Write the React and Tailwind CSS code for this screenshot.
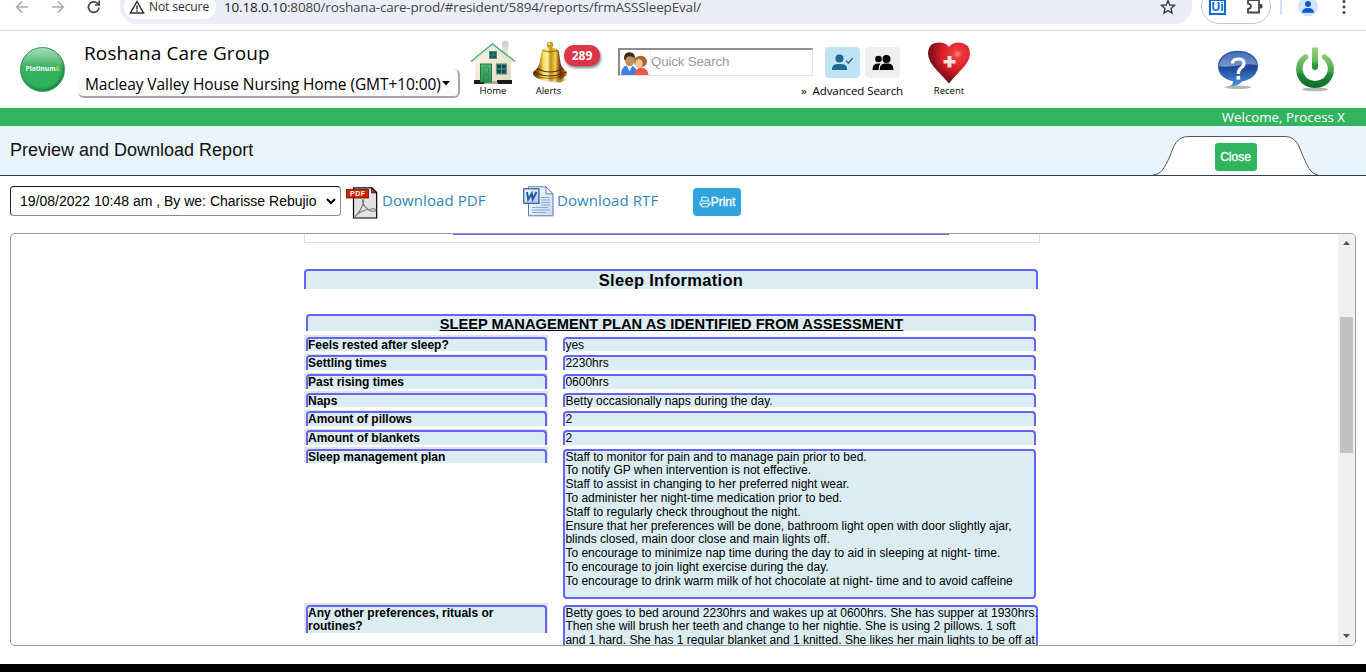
import React from "react";

const UI = "font-['Open_Sans','Noto_Sans',sans-serif]";

function BrowserBar() {
  return (
    <div className={`flex h-[31px] shrink-0 items-start overflow-hidden border-b border-[#dcdcdc] bg-white ${UI}`}>
      <svg className="ml-[14px] mt-0 h-[15px] w-[16px]" viewBox="0 0 16 15" fill="none" stroke="#a9abae" strokeWidth="1.6">
        <path d="M14 7H3M8 1.500L2.600 7L8 12.500" />
      </svg>
      <svg className="ml-[21px] mt-0 h-[15px] w-[16px]" viewBox="0 0 16 15" fill="none" stroke="#a9abae" strokeWidth="1.600">
        <path d="M1 7h11M7 1.500L12.400 7L7 12.500" />
      </svg>
      <svg className="ml-[19px] h-[15px] w-[16px]" viewBox="0 0 16 15" fill="none" stroke="#46484b" strokeWidth="1.700">
        <path d="M13 7.500A5.300 5.300 0 1 1 11.300 3.200L13 4.800" />
        <path d="M13.200 0.500V5H9" />
      </svg>
      <div className="ml-[18px] flex h-[24px] w-[1072px] items-start rounded-b-[17px] bg-[#ebeef8]">
        <div className="ml-[4px] flex h-[19px] w-[92px] items-start rounded-b-[12px] rounded-t-[4px] bg-white">
          <svg className="ml-[5px] h-[14px] w-[16px]" viewBox="0 0 16 14" fill="none" stroke="#333" strokeWidth="1.500">
            <path d="M8 1.500L14.500 13H1.500Z" />
            <path d="M8 5.500v4M8 10.300v1.500" />
          </svg>
          <span className="ml-[4px] whitespace-nowrap text-[12px] font-medium leading-[14px] tracking-[-0.08px] text-[#2a2a2a]">Not secure</span>
        </div>
        <span className="ml-[8px] w-[481px] whitespace-nowrap text-[13.500px] leading-[14px] tracking-[-0.170px] text-[#45474b]">
          <span className="text-[#222]">10.18.0.10</span>:8080/roshana-care-prod/#resident/5894/reports/frmASSSleepEval/
        </span>
        <svg className="ml-[455px] -mt-[1px] h-[16px] w-[16px]" viewBox="0 0 16 16" fill="none" stroke="#3c3e41" strokeWidth="1.400">
          <path d="M8 1.600L9.900 6L14.500 6.400L11 9.500L12 14L8 11.600L4 14L5 9.500L1.500 6.400L6.100 6Z" />
        </svg>
      </div>
      <div className="-mt-[12px] ml-[9px] flex h-[36px] w-[70px] rounded-[18px] border border-[#c4c6ca]">
        <div className="ml-[7px] mt-[10px] flex h-[16px] w-[17px] items-center justify-center border-2 border-[#0a67d8] font-['Liberation_Sans',sans-serif] text-[12px] font-bold leading-[12px] text-[#0a67d8]">Ui</div>
        <svg className="ml-[20px] mt-[9px] h-[18px] w-[18px]" viewBox="0 0 18 18" fill="none" stroke="#44464a" strokeWidth="1.800">
          <path d="M2 2h11v12.500H2V11q3-.5 3-2.700T2 5.700z" />
          <path d="M14 6.500h2v3.500h-2z" fill="#44464a" strokeWidth=".8" />
        </svg>
      </div>
      <div className="ml-[9px] h-[15px] w-[2px] bg-[#d3e3fd]" />
      <svg className="-mt-[3px] ml-[16px] h-[20px] w-[20px]" viewBox="0 0 20 20">
        <circle cx="10" cy="9.500" r="9.800" fill="#d3e3fd" />
        <circle cx="10" cy="7" r="3" fill="#0b57d0" />
        <path d="M4 15.800q0-4.800 6-4.800t6 4.800z" fill="#0b57d0" />
      </svg>
      <svg className="ml-[24px] h-[15px] w-[4px]" viewBox="0 0 4 15" fill="#444">
        <circle cx="2" cy="1.500" r="1.500" /><circle cx="2" cy="7" r="1.500" /><circle cx="2" cy="12.500" r="1.500" />
      </svg>
    </div>
  );
}

function HouseIcon() {
  return (
    <svg className="h-[46px] w-[46px]" viewBox="0 0 46 46">
      <defs>
        <linearGradient id="hw" x1="0" y1="0" x2="1" y2="1"><stop offset="0" stopColor="#fbf6ec" /><stop offset="1" stopColor="#e3d8c6" /></linearGradient>
        <linearGradient id="hd" x1="0" y1="0" x2="0" y2="1"><stop offset="0" stopColor="#55b97a" /><stop offset="1" stopColor="#2a9450" /></linearGradient>
      </defs>
      <path d="M32 7v8l6 5V7z" fill="#e6ded3" />
      <path d="M32 5q0-3.500 3.300-3.500T38.600 5v3H32z" fill="#cfd1d4" />
      <path d="M5 22L22.500 7L41 22v20H5z" fill="url(#hw)" />
      <path d="M4 41h11v4H4zM27 41h15v4H27z" fill="#1b1b1b" />
      <path d="M15 42h12l1 3H14z" fill="#b9a78d" />
      <path d="M1 22.500L22.500 5L45 22.500" fill="none" stroke="#48b06c" strokeWidth="1.500" />
      <path d="M2.500 23.500L22.500 7.300L43.500 23.500" fill="none" stroke="#d7e9da" strokeWidth="1.200" />
      <rect x="19.500" y="12.500" width="7" height="7" fill="#24476b" stroke="#3a9d5c" />
      <path d="M23 12.500v7M19.500 16h7" stroke="#3a9d5c" strokeWidth=".8" />
      <rect x="10.500" y="25" width="11" height="18" fill="url(#hd)" stroke="#1f7c40" />
      <path d="M14 28h4.500v6H14zM14 36h4.500v5H14z" stroke="#267f45" strokeWidth=".6" fill="none" />
      <rect x="26.500" y="25" width="10" height="10" fill="#243d63" stroke="#3fae62" strokeWidth="1.200" />
      <path d="M31.500 25v10M26.500 30h10" stroke="#3fae62" />
    </svg>
  );
}

function BellIcon() {
  return (
    <svg className="h-[43px] w-[36px]" viewBox="0 0 36 43">
      <defs>
        <linearGradient id="bg" x1="0" x2="1">
          <stop offset="0" stopColor="#54230a" /><stop offset=".14" stopColor="#8f5510" /><stop offset=".3" stopColor="#f4d95a" />
          <stop offset=".42" stopColor="#fff3a6" /><stop offset=".52" stopColor="#c19417" /><stop offset=".66" stopColor="#f0d048" />
          <stop offset=".8" stopColor="#6b300b" /><stop offset="1" stopColor="#c48e1e" />
        </linearGradient>
      </defs>
      <ellipse cx="23" cy="38.500" rx="11" ry="3" fill="#bbb" opacity=".6" />
      <circle cx="27.500" cy="37.500" r="4" fill="#b98a16" />
      <circle cx="18" cy="4" r="3.200" fill="#c99b25" /><circle cx="17.300" cy="3" r="1.200" fill="#fbe88c" />
      <path d="M9.500 11Q10 6.800 18 6.500Q26.500 6.800 27 11L28.500 22Q29.500 27 34.500 30.500Q36.500 34.500 30 37.500Q25 40 18 40Q11 40 6 37.500Q-.5 34.500 1.500 30.500Q6.500 27 7.500 22Z" fill="url(#bg)" />
      <path d="M2 31Q17 39 34.500 31M5 27.500Q18 34.500 31.500 27.500" fill="none" stroke="#5c2a08" strokeWidth="1.100" />
      <path d="M3 34Q17 41 33 34" fill="none" stroke="#7a430b" strokeWidth=".8" />
      <path d="M10.500 9.500Q18 12.500 26 9.500" fill="none" stroke="#754509" strokeWidth=".8" />
    </svg>
  );
}

function PeopleIcon() {
  return (
    <svg className="h-[24px] w-[29px]" viewBox="0 0 29 24">
      <path d="M1 24Q1 15.500 7 14.500h4q6 1 6 9.500z" fill="#3f7fe0" />
      <path d="M6.500 14.500l3 6l3-6z" fill="#f4f7fc" />
      <path d="M14.500 24q.5-7 6.500-7.500q7 .5 7.500 7.500z" fill="#ee5a4a" />
      <ellipse cx="20.500" cy="10.500" rx="6.500" ry="5.800" fill="#a8622f" />
      <ellipse cx="19" cy="12.500" rx="3.800" ry="4.600" fill="#f3c08f" />
      <ellipse cx="9.700" cy="9" rx="4.700" ry="6.200" fill="#c98c5c" />
      <path d="M4.300 9Q3 1.500 9.500 1.200Q15.800 1.500 14.900 8.500Q13.500 5 10.500 5.500Q6.500 4.500 5.500 9z" fill="#3a2a20" />
    </svg>
  );
}

function HeartIcon() {
  return (
    <svg className="h-[43px] w-[44px]" viewBox="0 0 44 43">
      <defs>
        <radialGradient id="hh" cx=".7" cy=".28" r=".75"><stop offset="0" stopColor="#ff8b85" /><stop offset=".14" stopColor="#f03a3c" /><stop offset=".5" stopColor="#d91e28" /><stop offset="1" stopColor="#5e0d12" /></radialGradient>
      </defs>
      <path d="M22 42.500Q18 38 10 29.500Q1 20 1 12.500Q1.500 1.500 12 1.500Q19 1.500 22 6Q25 1.500 32 1.500Q42.500 2 43 12.500Q42.500 21 34 29Q27 36 22 42.500Z" fill="url(#hh)" />
      <path d="M20.500 15h4v4h4v3.500h-4v4h-4v-4h-4v-3.500h4z" fill="#ece4e4" />
    </svg>
  );
}

function HelpIcon() {
  return (
    <svg className="h-[40px] w-[42px]" viewBox="0 0 42 40">
      <defs>
        <linearGradient id="hb" x1="0" y1="0" x2="0" y2="1"><stop offset="0" stopColor="#2b57a8" /><stop offset=".5" stopColor="#1f4a9c" /><stop offset="1" stopColor="#4d9be0" /></linearGradient>
        <linearGradient id="hg" x1="0" y1="0" x2="0" y2="1"><stop offset="0" stopColor="#4a78c4" /><stop offset="1" stopColor="#a9c1e6" /></linearGradient>
      </defs>
      <ellipse cx="21" cy="37.300" rx="13" ry="1.800" fill="#999" opacity=".7" />
      <path d="M21 .8C32 .8 41 7 41 16C41 24 34 30 25 31.500Q21 36.500 12.500 36.500Q16 34.500 16 31.200C7 29.500 1 24 1 16C1 7 10 .8 21 .8Z" fill="url(#hb)" />
      <path d="M21 2C31 2 39.500 8 40 15Q31 13.500 21 15.500Q10 17.500 2 16C2.500 8 11 2 21 2Z" fill="url(#hg)" opacity=".65" />
      <path d="M15.500 13.500Q15.500 9 21.300 9Q27 9 27 13.200Q27 16 24 18Q21.300 20 21.300 24" fill="none" stroke="#fff" strokeWidth="3.200" />
      <rect x="19.500" y="26" width="3.600" height="3.600" fill="#fff" />
    </svg>
  );
}

function PowerIcon() {
  return (
    <svg className="h-[45px] w-[40px]" viewBox="0 0 40 45">
      <defs>
        <linearGradient id="pg" x1="0" y1="0" x2="0" y2="1"><stop offset="0" stopColor="#8ccb70" /><stop offset=".5" stopColor="#4ba64c" /><stop offset=".58" stopColor="#1f8a3b" /><stop offset="1" stopColor="#0d6a2a" /></linearGradient>
        <linearGradient id="ps" x1="0" y1="0" x2="0" y2="1"><stop offset="0" stopColor="#9bd37b" /><stop offset=".6" stopColor="#6cb85a" /><stop offset=".75" stopColor="#2c9743" /><stop offset="1" stopColor="#1f8f3c" /></linearGradient>
      </defs>
      <ellipse cx="20" cy="42.300" rx="13" ry="2" fill="#999" opacity=".7" />
      <path d="M9.500 7.500Q13.500 6.500 13.300 11Q7.500 15 7.500 22.500Q9 33 20 34Q31.500 33 33 22.500Q32.500 15 26.800 11Q26.500 6.500 30.500 7.500Q39 13 39 22.500Q37.500 40 20 41Q2.500 40 1 22.500Q1.500 12 9.500 7.500Z" fill="url(#pg)" />
      <path d="M17 0.500h6v19.500q0 3-3 3t-3-3z" fill="url(#ps)" />
    </svg>
  );
}

function Header() {
  return (
    <div className={`flex h-[77px] shrink-0 items-start bg-white ${UI} text-black`}>
      <div className="ml-[20px] mt-[16px] flex h-[45px] w-[45px] items-center justify-center rounded-full border border-[#2c9a52] bg-gradient-to-b from-[#a5dcb8] via-[#33b25f] via-45% to-[#2fb15c] text-[6.600px] font-bold leading-none text-white shadow-[inset_-1px_-2px_2px_rgba(15,95,45,0.6)]">
        Platinum<span className="text-[#c8d92c]">6</span>
      </div>
      <div className="ml-[13px] mt-[10px] w-[382px]">
        <div className="whitespace-nowrap pl-[6px] text-[19px] font-medium leading-[24px] tracking-[0.110px]">Roshana Care Group</div>
        <div className="mt-[4px] flex h-[29px] items-center rounded-[6px] border-b-2 border-r-2 border-[#a5a5a5] bg-gradient-to-b from-white to-[#fafafa] pl-[7px] pt-[2px]">
          <span className="w-[357px] whitespace-nowrap text-[15.500px] leading-[22px] tracking-[-0.080px]">Macleay Valley House Nursing Home (GMT+10:00)</span>
          <svg className="h-[5px] w-[8px]" viewBox="0 0 8 5"><path d="M0 0h8L4 4.600z" /></svg>
        </div>
      </div>
      <div className="ml-[10px] mt-[8px] flex w-[46px] flex-col items-center">
        <HouseIcon />
        <span className="-mt-[1px] text-[9.500px] leading-[13px]">Home</span>
      </div>
      <div className="relative ml-[16px] mt-[10px] flex w-[36px] flex-col items-center">
        <BellIcon />
        <span className="-ml-[3px] text-[9.500px] leading-[13px]">Alerts</span>
        <span className="absolute left-[32px] top-[4px] flex h-[21px] w-[36px] items-center justify-center rounded-[10px] bg-[#dc3545] text-[12px] font-bold text-white shadow-[1px_2px_3px_rgba(0,0,0,0.5)]">289</span>
      </div>
      <div className="ml-[50px] mt-[17px] flex h-[28px] w-[195px] items-end border border-l-2 border-t-2 border-[#e3e3e3] border-l-[#8a8a8a] border-t-[#8f8f8f] bg-white">
        <PeopleIcon />
        <span className="ml-[1px] flex h-full items-center whitespace-nowrap border-l border-[#ececec] pb-[1px] font-['Liberation_Sans',sans-serif] text-[13.333px] tracking-[-0.150px] text-[#9a9a9a]">Quick Search</span>
      </div>
      <div className="-ml-[12px] mt-[16px] w-[108px]">
        <div className="ml-[24px] flex gap-[5px]">
          <div className="flex h-[31px] w-[35px] items-center justify-center rounded-[4px] bg-[#bfe2f4]">
            <svg className="h-[17px] w-[23px]" viewBox="0 0 23 17" fill="#1c6b92">
              <circle cx="8.500" cy="4.500" r="4" /><path d="M.8 16q0-6 5.500-6h4.400q5.500 0 5.500 6z" />
              <path d="M15 6.800l2.300 2.200l4.300-4.800" fill="none" stroke="#1c6b92" strokeWidth="1.300" />
            </svg>
          </div>
          <div className="flex h-[31px] w-[35px] items-center justify-center rounded-[4px] bg-[#efefef]">
            <svg className="h-[17px] w-[22px]" viewBox="0 0 22 17">
              <circle cx="6.500" cy="5" r="3.300" /><path d="M.5 16q0-6.500 5-6.500h3q-2 2-2 6.500z" />
              <circle cx="14.500" cy="5" r="4" /><path d="M7.700 16q0-6.500 5-6.500h3.800q5 0 5 6.500z" />
            </svg>
          </div>
        </div>
        <div className="mt-[5px] flex gap-[6px] whitespace-nowrap text-[11.500px] leading-[16px] tracking-[-0.100px]"><span>»</span><span>Advanced Search</span></div>
      </div>
      <div className="ml-[18px] mt-[10px] flex w-[44px] flex-col items-center">
        <HeartIcon />
        <span className="text-[9.500px] leading-[13px]">Recent</span>
      </div>
      <div className="ml-auto mr-[31px] mt-[16px] flex gap-[36px]">
        <div className="mt-[3px]"><HelpIcon /></div>
        <PowerIcon />
      </div>
    </div>
  );
}

function TitleBar() {
  return (
    <div className="flex h-[50px] shrink-0 justify-between border-b border-[#2c3e63] bg-[#e9f4fb] font-['Liberation_Sans',sans-serif]">
      <h1 className="ml-[10px] mt-[12px] whitespace-nowrap text-[18px] leading-[24px] text-[#111]">Preview and Download Report</h1>
      <div className="relative mr-[48px] mt-[10px] flex h-[39px] w-[165px] justify-center">
        <svg className="absolute inset-0 h-[39px] w-[165px]" viewBox="0 0 165 39">
          <path d="M0 39C8 38.500 11 33 17 20C21 10 23 .5 36 .5H132C143 .5 146 10 149 18C155 31 157 37.500 165 39" fill="#fff" stroke="#555" />
        </svg>
        <button className="relative mt-[7px] h-[28px] w-[42px] rounded-[3px] bg-[#32b45f] text-[12px] text-white [-webkit-text-stroke:0.300px_white]">Close</button>
      </div>
    </div>
  );
}

function PdfIcon() {
  return (
    <svg className="h-[32px] w-[32px]" viewBox="0 0 32 32">
      <path d="M7.500 .8H26l4.700 4.700v25.500H7.500z" fill="#e2e2e2" stroke="#000" strokeWidth="1.200" />
      <path d="M25.500 1l5 5h-5z" fill="#d42a0c" stroke="#000" strokeWidth=".6" />
      <path d="M9 29.500Q14 25 17.500 16Q18 12 16.500 13Q16 17 22 22.500Q26 25 29.500 24Q31 22 27 21.800Q17 22.500 11 27.500Q8 30 10 30" fill="none" stroke="#7d7d7d" strokeWidth="1.100" />
      <rect x=".5" y="2.500" width="22" height="8.500" fill="#d42000" stroke="#5a1405" strokeWidth=".8" />
      <text x="11.500" y="9.300" textAnchor="middle" fontSize="7" fontWeight="bold" textLength="15" fontFamily="Liberation Sans, sans-serif" fill="#fff">PDF</text>
    </svg>
  );
}

function WordIcon() {
  return (
    <svg className="h-[31px] w-[31px]" viewBox="0 0 31 31">
      <defs>
        <linearGradient id="wp" x1="0" y1="0" x2="1" y2="1"><stop offset="0" stopColor="#fff" /><stop offset="1" stopColor="#c4d8f5" /></linearGradient>
        <linearGradient id="wb" x1="0" y1="0" x2="1" y2="1"><stop offset="0" stopColor="#fff" /><stop offset="1" stopColor="#a9c4ee" /></linearGradient>
      </defs>
      <path d="M5.500 .8H23l7 7v22H5.500z" fill="url(#wp)" stroke="#6079a8" />
      <path d="M23 .8v7h7z" fill="#fff" stroke="#6079a8" />
      <path d="M18 11.500h8M18 14h9M18 16.500h9M18 19h9M9 21.500h16M9 24h18M9 26.500h14" stroke="#7ba0d8" strokeWidth=".9" />
      <rect x=".8" y="2.800" width="15.200" height="14.500" fill="url(#wb)" stroke="#2d56a5" strokeWidth="1.200" />
      <path d="M4 6L5.200 13.500L8.800 7.500L9.600 13.500L13.500 6" fill="none" stroke="#2856a8" strokeWidth="2" />
    </svg>
  );
}

function Toolbar() {
  return (
    <div className={`flex h-[57px] shrink-0 items-start bg-white ${UI}`}>
      <div className="ml-[10px] mt-[10px] flex h-[30px] w-[331px] items-center rounded-[4px] border border-[#8a8a8a] border-l-[#222] border-t-[#111] bg-white pl-[9px] pt-[1px]">
        <span className="w-[303px] whitespace-nowrap font-['Liberation_Sans',sans-serif] text-[14px] text-black">19/08/2022 10:48 am , By we: Charisse Rebujio</span>
        <svg className="ml-[3px] h-[7px] w-[10px]" viewBox="0 0 10 7" fill="none" stroke="#000" strokeWidth="2"><path d="M1 1l4 4l4-4" /></svg>
      </div>
      <div className="ml-[5px] mt-[11px]"><PdfIcon /></div>
      <span className="ml-[4px] mt-[13px] w-[105px] whitespace-nowrap text-[15px] leading-[22px] tracking-[0.090px] text-[#2f86bd]">Download PDF</span>
      <div className="ml-[36px] mt-[10px]"><WordIcon /></div>
      <span className="ml-[3px] mt-[13px] w-[102px] whitespace-nowrap text-[15px] leading-[22px] tracking-[0.090px] text-[#2f86bd]">Download RTF</span>
      <button className="ml-[34px] mt-[12px] flex h-[28px] w-[48px] items-center justify-center rounded-[4px] bg-[#30a3dc] font-['Liberation_Sans',sans-serif] text-[12px] text-white [-webkit-text-stroke:0.300px_white]">
        <svg className="h-[12px] w-[12px] shrink-0" viewBox="0 0 13 12" fill="none" stroke="#fff">
          <path d="M3 5V.8h5.500L10 2.300V5M3 9H1V6.500Q1 5 2.500 5h8Q12 5 12 6.500V9h-2M3 7.500h7v3.700H3z" />
        </svg>
        Print
      </button>
    </div>
  );
}

const FIELDS = [
  ["Feels rested after sleep?", "yes", "pt-[2px]", "h-[14px]", "mb-[3px]"],
  ["Settling times", "2230hrs", "pt-[1px]", "h-[15px]", "mb-[3px]"],
  ["Past rising times", "0600hrs", "pt-[1px]", "h-[15px]", "mb-[2px]"],
  ["Naps", "Betty occasionally naps during the day.", "pt-[2px]", "h-[14px]", "mb-[3px]"],
  ["Amount of pillows", "2", "pt-[1px]", "h-[15px]", "mb-[3px]"],
  ["Amount of blankets", "2", "pt-[1px]", "h-[15px]", "mb-[2px]"],
];

const PLAN = [
  "Staff to monitor for pain and to manage pain prior to bed.",
  "To notify GP when intervention is not effective.",
  "Staff to assist in changing to her preferred night wear.",
  "To administer her night-time medication prior to bed.",
  "Staff to regularly check throughout the night.",
  "Ensure that her preferences will be done, bathroom light open with door slightly ajar,",
  "blinds closed, main door close and main lights off.",
  "To encourage to minimize nap time during the day to aid in sleeping at night- time.",
  "To encourage to join light exercise during the day.",
  "To encourage to drink warm milk of hot chocolate at night- time and to avoid caffeine",
];

const NOTES = [
  "Betty goes to bed around 2230hrs and wakes up at 0600hrs. She has supper at 1930hrs.",
  "Then she will brush her teeth and change to her nightie. She is using 2 pillows. 1 soft",
  "and 1 hard. She has 1 regular blanket and 1 knitted. She likes her main lights to be off at",
];

const BOX = "rounded-t-[4px] border-2 border-b-0 border-[#6464fa] bg-[#dbecf3]";

function Label({ pad, height, children }) {
  return (
    <div className={`w-[244px] self-start bg-[#e3e3e3] pl-[2px] pr-[1px] ${pad}`}>
      <div className={`${BOX} ${height} whitespace-nowrap font-bold`}>{children}</div>
    </div>
  );
}

function Report() {
  return (
    <div className="flex h-[413px] shrink-0">
      <div className="ml-[10px] flex w-[1346px] overflow-hidden rounded-[5px] border border-[#999] bg-white">
        <div className="ml-[293px] w-[736px] shrink-0 font-['Liberation_Sans',sans-serif] text-[12px] leading-[13.800px] text-black">
          <div className="flex h-[9px] border-x border-b border-[#e0e0e0]">
            <div className="ml-[148px] h-px w-[496px] bg-[#6464fa]" />
          </div>
          <div className={`mt-[26px] h-[20px] w-[734px] ${BOX} text-center text-[16.500px] font-bold leading-[19px] tracking-[0.300px]`}>Sleep Information</div>
          <div className={`ml-[2px] mt-[25px] h-[17px] w-[730px] ${BOX} pl-[1px] text-center text-[14.667px] font-bold leading-[16px] underline`}>
            SLEEP MANAGEMENT PLAN AS IDENTIFIED FROM ASSESSMENT
          </div>
          <div className="mt-[4px]">
            {FIELDS.map(([label, value, pad, height, gap]) => (
              <div key={label} className={`flex ${gap}`}>
                <Label pad={pad} height={height}>{label}</Label>
                <div className={`ml-[15px] w-[473px] ${pad}`}>
                  <div className={`${BOX} ${height} whitespace-nowrap pl-[0.400px]`}>{value}</div>
                </div>
              </div>
            ))}
            <div className="flex">
              <Label pad="pt-[2px]" height="h-[14px]">Sleep management plan</Label>
              <div className="ml-[15px] mt-[2px] h-[150px] w-[473px] whitespace-nowrap rounded-[4px] border-2 border-[#6464fa] bg-[#dbecf3] pl-[0.400px]">
                <div className="-mt-[0.400px]">
                  {PLAN.map((line) => <div key={line}>{line}</div>)}
                </div>
              </div>
            </div>
            <div className="mt-[4px] flex">
              <Label pad="pt-[2px]" height="h-[28px]"><div className="-mt-[0.400px]">Any other preferences, rituals or<br />routines?</div></Label>
              <div className={`ml-[15px] mt-[2px] h-[60px] w-[475px] whitespace-nowrap ${BOX} pl-[0.400px]`}>
                <div className="-mt-[0.400px]">
                  {NOTES.map((line) => <div key={line}>{line}</div>)}
                </div>
              </div>
            </div>
          </div>
        </div>
        <div className="ml-auto flex w-[17px] shrink-0 flex-col items-center bg-[#f0f0f0]">
          <svg className="mt-[7px] h-[4px] w-[7px]" viewBox="0 0 7 4"><path d="M0 4h7L3.500 0z" fill="#505050" /></svg>
          <div className="mt-[72px] h-[136px] w-[13px] bg-[#c1c1c1]" />
          <svg className="mb-[7px] mt-auto h-[4px] w-[7px]" viewBox="0 0 7 4"><path d="M0 0h7L3.500 4z" fill="#505050" /></svg>
        </div>
      </div>
    </div>
  );
}

export default function App() {
  return (
    <div className="flex h-[672px] w-[1366px] flex-col overflow-hidden bg-white">
      <BrowserBar />
      <Header />
      <div className={`flex h-[18px] shrink-0 items-center justify-end bg-[#32b45f] pr-[21px] text-[13.300px] leading-[18px] text-white ${UI}`}>Welcome, Process X</div>
      <TitleBar />
      <Toolbar />
      <Report />
      <div className="mt-auto h-[8px] shrink-0 bg-black" />
    </div>
  );
}
